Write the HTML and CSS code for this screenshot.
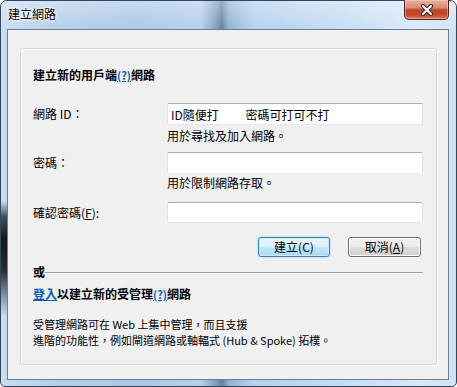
FILE: index.html
```html
<!DOCTYPE html>
<html lang="zh-Hant">
<head>
<meta charset="utf-8">
<title>建立網路</title>
<link rel="stylesheet" href="styles.css">
</head>
<body>
<div class="window">
  <div class="titlebar">
    <span class="title">建立網路</span>
  </div>
  <button class="close" aria-label="關閉">
    <svg width="14" height="12" viewBox="0 0 14 12">
      <path d="M3 2 L11 10 M11 2 L3 10" stroke="#3a2a28" stroke-width="4.2" stroke-linecap="round" fill="none"/>
      <path d="M3 2 L11 10 M11 2 L3 10" stroke="#ffffff" stroke-width="2.2" stroke-linecap="round" fill="none"/>
    </svg>
  </button>
  <div class="client">
    <div class="panel">
      <div class="heading">建立新的用戶端<a class="help">(?)</a>網路</div>
      <div class="row r1">
        <label class="label">網路 ID：</label>
        <input class="field" type="text" value="ID隨便打　　 密碼可打可不打">
      </div>
      <div class="hint h1">用於尋找及加入網路。</div>
      <div class="row r2">
        <label class="label">密碼：</label>
        <input class="field" type="text">
      </div>
      <div class="hint h2">用於限制網路存取。</div>
      <div class="row r3">
        <label class="label">確認密碼(<u>F</u>):</label>
        <input class="field f3" type="text">
      </div>
      <div class="buttons">
        <button class="btn btn-default">建立(C)</button>
        <button class="btn btn-cancel">取消(<u>A</u>)</button>
      </div>
      <div class="or"><span class="or-text">或</span><span class="or-line"></span></div>
      <div class="managed"><a class="link">登入</a>以建立新的受管理<a class="help">(?)</a>網路</div>
      <p class="desc">受管理網路可在 Web 上集中管理，而且支援<br>進階的功能性，例如閘道網路或軸輻式 (Hub &amp; Spoke) 拓樸。</p>
    </div>
  </div>
</div>
</body>
</html>
```
FILE: styles.css
```css
* { box-sizing: border-box; }
html, body { margin: 0; padding: 0; }
body {
  width: 457px;
  height: 387px;
  overflow: hidden;
  background: #ffffff;
  font-family: "Noto Sans CJK TC", "Noto Sans", sans-serif;
  font-size: 12px;
  color: #000;
}
.window {
  position: relative;
  width: 457px;
  height: 387px;
  border: 1px solid #34465a;
  border-radius: 7px 7px 5px 5px;
  display: flex;
  flex-direction: column;
  padding: 0 7px 6px 6px;
  background:
    linear-gradient(to bottom, rgba(20,30,40,0) 0, rgba(20,30,40,0) 52%, rgba(40,55,70,.85) 56%, rgba(10,12,15,.95) 62%, rgba(20,25,30,.9) 70%, rgba(70,90,110,.6) 76%, rgba(20,30,40,0) 82%) left top / 7px 100% no-repeat,
    linear-gradient(to bottom, rgba(255,255,255,.35) 0, rgba(255,255,255,0) 30px),
    linear-gradient(90deg, #c9dcf0 0%, #b4cee9 12%, #a9c8e6 30%, #b3cfeb 44%, #7a9abb 47.5%, #5f7f9f 48.5%, #8fb0d1 50%, #b2d0ee 55%, #c4dcf3 75%, #d9e9f8 92%, #cfe2f4 100%);
}
.titlebar {
  height: 28px;
  display: flex;
  align-items: flex-start;
  padding: 5px 0 0 1px;
}
.title {
  font-size: 12px;
  line-height: 16px;
  color: #000;
  text-shadow: 0 0 5px #fff, 0 0 3px #fff, 0 0 2px #fff;
}
.close {
  position: absolute;
  top: -1px;
  right: 7px;
  width: 45px;
  height: 20px;
  padding: 0;
  border: 1px solid #4c241c;
  border-top: none;
  border-radius: 0 0 5px 5px;
  background: linear-gradient(to bottom, #e9b1a2 0%, #d98c76 40%, #c44528 52%, #c2452a 75%, #d77a5e 100%);
  box-shadow: inset 0 0 0 1px rgba(255,220,210,.45);
  display: flex;
  align-items: center;
  justify-content: center;
}
.close svg { display: block; margin-top: 1px; }
.client {
  flex: 1;
  background: #f0f0f0;
  border: 1px solid #6b7f94;
  display: flex;
  flex-direction: column;
  padding: 18px 11px 14px 12px;
}
.panel {
  flex: 1;
  border: 1px solid #d5d5d5;
  border-radius: 3px;
  box-shadow: inset 1px 1px 0 #ffffff, 1px 1px 0 #ffffff;
  padding: 18px 13px 0 12px;
}
.heading {
  font-weight: bold;
  line-height: 16px;
  height: 16px;
}
.help {
  color: #0a5cb8;
  text-decoration: underline;
  font-weight: bold;
  font-size: 11px;
}
.row {
  display: grid;
  grid-template-columns: 134px 256px;
  align-items: center;
}
.r1 { margin-top: 20px; }
.r2 { margin-top: 8px; }
.r3 { margin-top: 11px; }
.label { line-height: 16px; }
.field {
  height: 22px;
  width: 256px;
  border: 1px solid;
  border-color: #abadb3 #dbdfe6 #e3e9ef #e2e3ea;
  border-radius: 2px;
  background: #fff;
  font-family: "Noto Sans CJK TC", "Noto Sans", sans-serif;
  font-size: 12px;
  padding: 0 3px;
  color: #000;
  outline: none;
  white-space: pre;
}
.f3 { height: 21px; }
.hint {
  padding-left: 134px;
  line-height: 16px;
  height: 16px;
}
.h1 { margin-top: 3px; }
.h2 { margin-top: 1px; }
.buttons {
  margin-top: 14px;
  display: flex;
  justify-content: flex-end;
  gap: 18px;
  padding-right: 2px;
}
.btn {
  height: 20px;
  border-radius: 3px;
  font-family: "Noto Sans CJK TC", "Noto Sans", sans-serif;
  font-size: 12px;
  line-height: 16px;
  padding: 0;
  color: #000;
}
.btn-default {
  width: 72px;
  border: 1px solid #3c7fb1;
  background: linear-gradient(to bottom, #eaf6fd 0%, #d9f0fc 48%, #bee6fd 52%, #a7d9f5 100%);
  box-shadow: inset 0 0 0 1px #cdeafa, 0 0 2px rgba(60,160,230,.5);
}
.btn-cancel {
  width: 73px;
  border: 1px solid #707070;
  background: linear-gradient(to bottom, #f2f2f2 0%, #ebebeb 48%, #dddddd 52%, #cfcfcf 100%);
  box-shadow: inset 0 0 0 1px #fbfbfb;
}
.or {
  margin-top: 7px;
  display: flex;
  align-items: center;
  height: 16px;
}
.or-text {
  font-weight: bold;
  line-height: 16px;
}
.or-line {
  flex: 1;
  height: 2px;
  border-top: 1px solid #a0a0a0;
  border-bottom: 1px solid #ffffff;
  margin-top: 1px;
}
.managed {
  margin-top: 6px;
  font-weight: bold;
  line-height: 16px;
  height: 16px;
}
.link {
  color: #0a5cb8;
  text-decoration: underline;
}
.desc {
  margin: 14px 0 0 0;
  font-size: 11px;
  line-height: 16px;
  color: #000;
}
```
